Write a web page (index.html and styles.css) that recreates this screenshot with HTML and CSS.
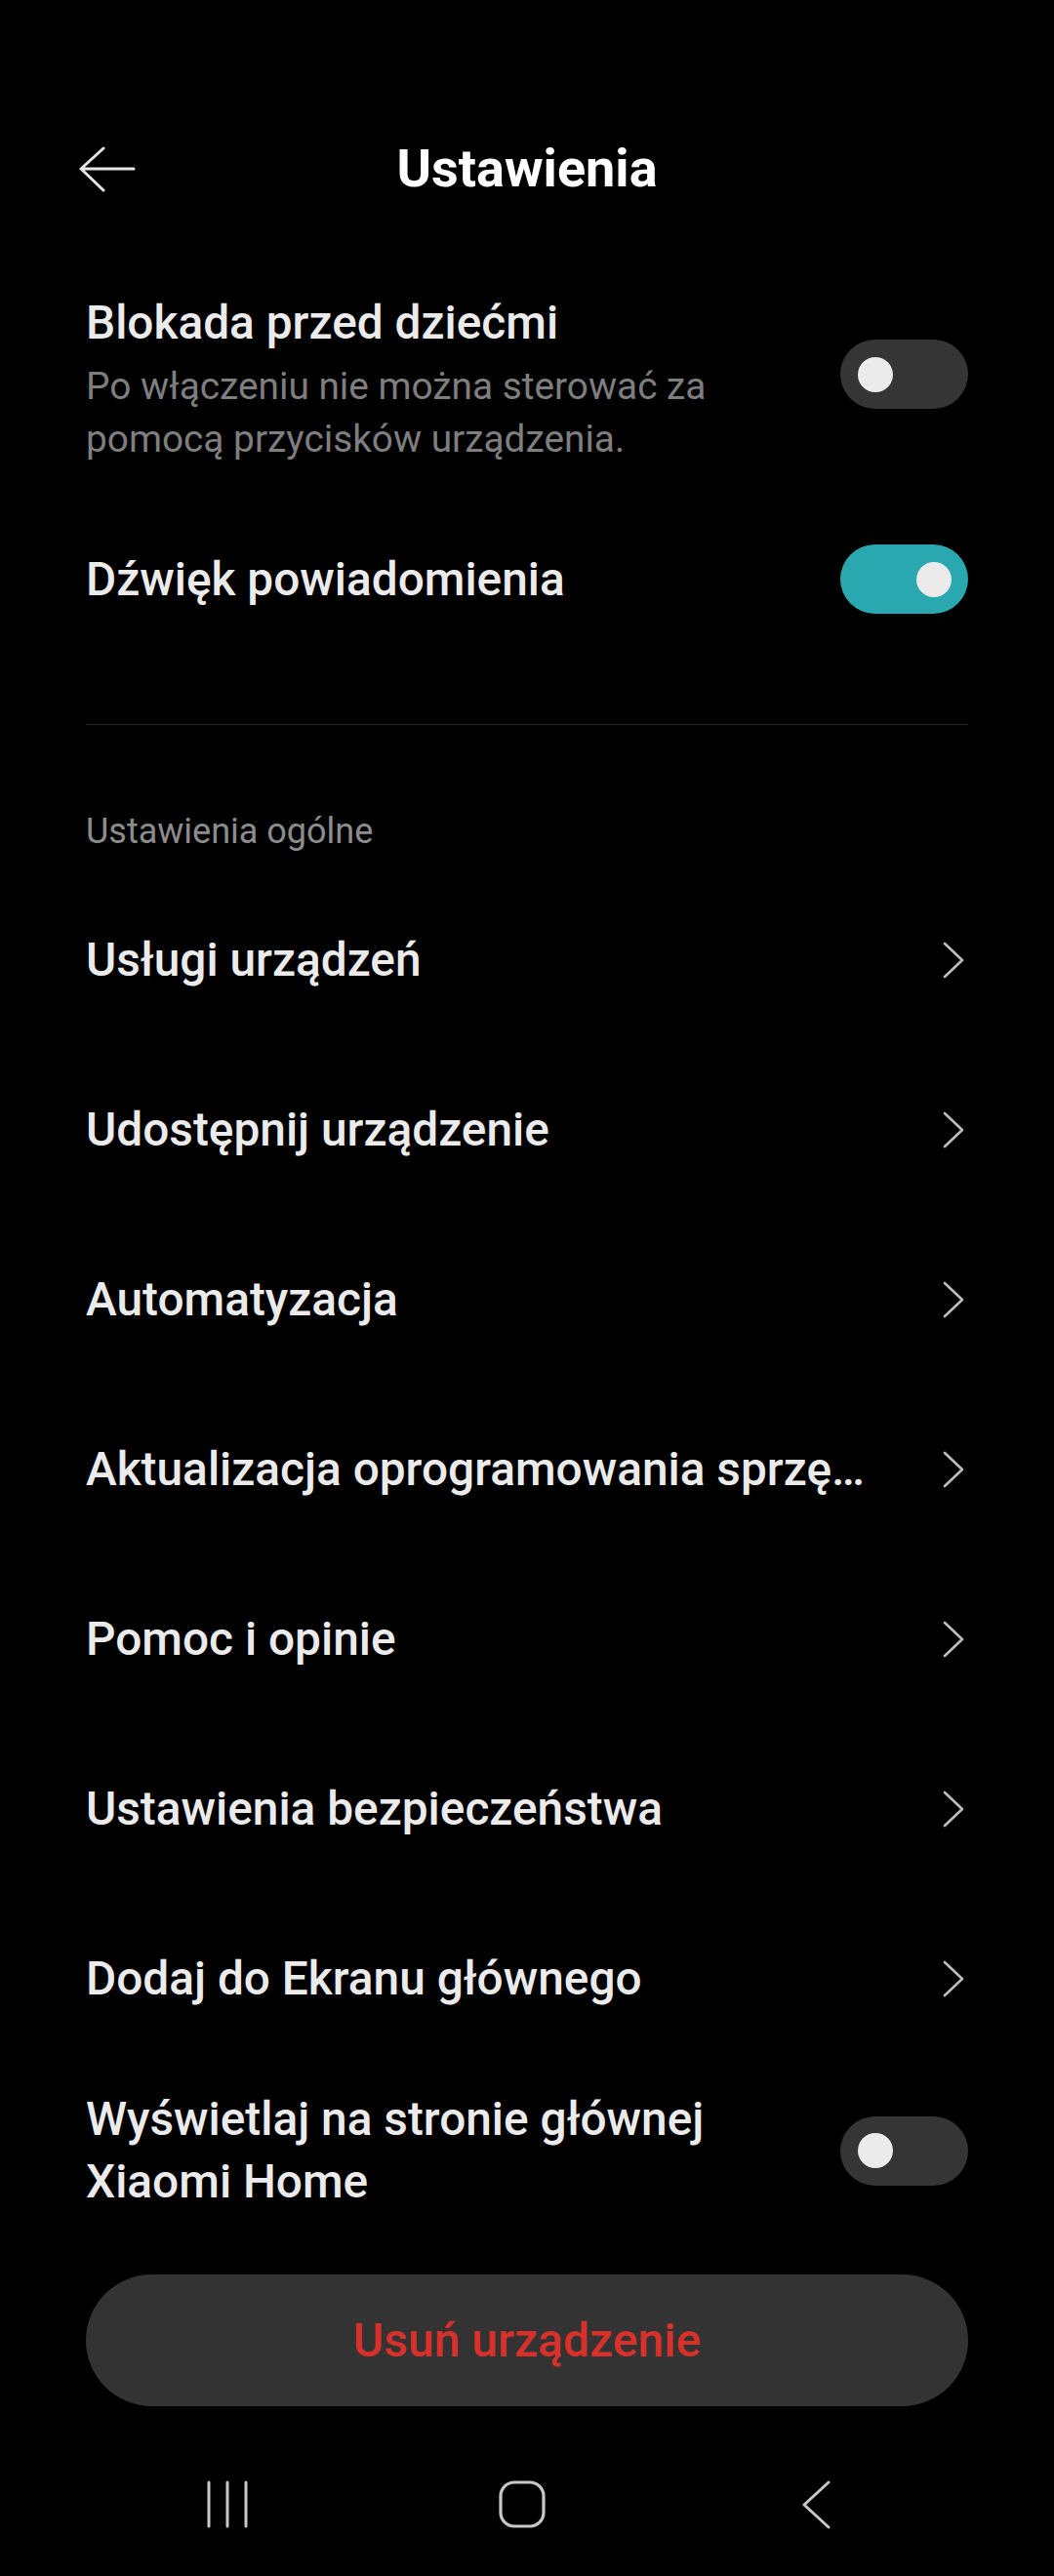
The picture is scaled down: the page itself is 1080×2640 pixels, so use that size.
FILE: index.html
```html
<!DOCTYPE html>
<html lang="pl">
<head>
<meta charset="utf-8">
<title>Ustawienia</title>
<link rel="stylesheet" href="styles.css">
</head>
<body>
<div class="screen">
  <header class="topbar">
    <svg class="back" width="60" height="50" viewBox="0 0 60 50">
      <path d="M57 23 H3 M26 2 L3 23 L26 45" fill="none" stroke="#e6e6e6" stroke-width="3" stroke-linecap="round" stroke-linejoin="round"/>
    </svg>
    <h1 class="title">Ustawienia</h1>
  </header>

  <div class="row row-lock">
    <div class="texts">
      <div class="label">Blokada przed dziećmi</div>
      <div class="sub">Po włączeniu nie można sterować za pomocą przycisków urządzenia.</div>
    </div>
    <div class="toggle"><span class="knob"></span></div>
  </div>

  <div class="row row-sound">
    <div class="texts"><div class="label">Dźwięk powiadomienia</div></div>
    <div class="toggle on"><span class="knob"></span></div>
  </div>

  <div class="divider"></div>

  <div class="section">Ustawienia ogólne</div>

  <ul class="menu">
    <li class="item"><span class="label ell">Usługi urządzeń</span><svg class="chev" width="30" height="40" viewBox="0 0 30 40"><path d="M6 3 L24 20 L6 37" fill="none" stroke="#bdbdbd" stroke-width="2.6" stroke-linecap="round" stroke-linejoin="round"/></svg></li>
    <li class="item"><span class="label ell">Udostępnij urządzenie</span><svg class="chev" width="30" height="40" viewBox="0 0 30 40"><path d="M6 3 L24 20 L6 37" fill="none" stroke="#bdbdbd" stroke-width="2.6" stroke-linecap="round" stroke-linejoin="round"/></svg></li>
    <li class="item"><span class="label ell">Automatyzacja</span><svg class="chev" width="30" height="40" viewBox="0 0 30 40"><path d="M6 3 L24 20 L6 37" fill="none" stroke="#bdbdbd" stroke-width="2.6" stroke-linecap="round" stroke-linejoin="round"/></svg></li>
    <li class="item"><span class="label ell">Aktualizacja oprogramowania sprzętowego</span><svg class="chev" width="30" height="40" viewBox="0 0 30 40"><path d="M6 3 L24 20 L6 37" fill="none" stroke="#bdbdbd" stroke-width="2.6" stroke-linecap="round" stroke-linejoin="round"/></svg></li>
    <li class="item"><span class="label ell">Pomoc i opinie</span><svg class="chev" width="30" height="40" viewBox="0 0 30 40"><path d="M6 3 L24 20 L6 37" fill="none" stroke="#bdbdbd" stroke-width="2.6" stroke-linecap="round" stroke-linejoin="round"/></svg></li>
    <li class="item"><span class="label ell">Ustawienia bezpieczeństwa</span><svg class="chev" width="30" height="40" viewBox="0 0 30 40"><path d="M6 3 L24 20 L6 37" fill="none" stroke="#bdbdbd" stroke-width="2.6" stroke-linecap="round" stroke-linejoin="round"/></svg></li>
    <li class="item"><span class="label ell">Dodaj do Ekranu głównego</span><svg class="chev" width="30" height="40" viewBox="0 0 30 40"><path d="M6 3 L24 20 L6 37" fill="none" stroke="#bdbdbd" stroke-width="2.6" stroke-linecap="round" stroke-linejoin="round"/></svg></li>
  </ul>

  <div class="row row-home">
    <div class="texts"><div class="label">Wyświetlaj na stronie głównej Xiaomi Home</div></div>
    <div class="toggle"><span class="knob"></span></div>
  </div>

  <div class="btn-wrap">
    <button class="danger">Usuń urządzenie</button>
  </div>

  <nav class="navbar">
    <svg class="nav-ico" width="60" height="50" viewBox="0 0 60 50">
      <path d="M11 2 V47 M30 2 V47 M49 2 V47" stroke="#c8c8c8" stroke-width="3" stroke-linecap="round"/>
    </svg>
    <svg class="nav-ico" width="60" height="50" viewBox="0 0 60 50">
      <rect x="8" y="2" width="44" height="45" rx="14" ry="14" fill="none" stroke="#c8c8c8" stroke-width="3.2"/>
    </svg>
    <svg class="nav-ico" width="60" height="50" viewBox="0 0 60 50">
      <path d="M42 2 L17 25 L42 48" fill="none" stroke="#c8c8c8" stroke-width="3" stroke-linecap="round" stroke-linejoin="round"/>
    </svg>
  </nav>
</div>
</body>
</html>
```

FILE: styles.css
```css
* { box-sizing: border-box; }
html, body {
  margin: 0;
  padding: 0;
  background: #000;
}
body {
  font-family: Roboto, "Noto Sans", "Liberation Sans", sans-serif;
  color: #e9e9e9;
}
.screen {
  width: 1080px;
  height: 2640px;
  overflow: hidden;
  background: #000;
}
.topbar {
  position: relative;
  height: 146px;
  margin-top: 100px;
  display: flex;
  align-items: center;
  justify-content: center;
}
.back {
  position: absolute;
  left: 80px;
  top: 50px;
}
.title {
  margin: 0;
  font-size: 54px;
  font-weight: 700;
  color: #fff;
  line-height: 64px;
}
.row {
  display: flex;
  align-items: center;
  padding: 0 88px;
  gap: 40px;
}
.texts { flex: 1; min-width: 0; }
.label {
  font-size: 47.8px;
  font-weight: 500;
  line-height: 64px;
  color: #ebebeb;
}
.sub {
  margin-top: 6px;
  font-size: 38.8px;
  line-height: 54px;
  color: #7e7e7e;
  padding-right: 20px;
}
.row-lock { padding-top: 53px; }
.row-lock .toggle { margin-bottom: 9px; }
.row-sound { margin-top: 81px; }
.toggle {
  flex: none;
  width: 131px;
  height: 71px;
  border-radius: 36px;
  background: #353535;
  display: flex;
  align-items: center;
  padding: 0 18px;
}
.toggle.on {
  background: #29a9af;
  justify-content: flex-end;
  padding: 0 17px;
}
.knob {
  width: 36px;
  height: 36px;
  border-radius: 50%;
  background: #ebebeb;
}
.divider {
  margin: 113px 88px 0;
  height: 1px;
  background: #2a2a2a;
}
.section {
  margin-top: 85px;
  padding: 0 88px;
  font-size: 36px;
  line-height: 48px;
  color: #8c8c8c;
}
.menu {
  list-style: none;
  margin: 21px 0 0;
  padding: 0;
}
.item {
  height: 174px;
  display: flex;
  align-items: center;
  padding: 0 88px;
  gap: 69px;
}
.item .label { flex: 1; min-width: 0; }
.ell {
  white-space: nowrap;
  overflow: hidden;
  text-overflow: ellipsis;
}
.chev { flex: none; }
.row-home {
  padding-top: 25px;
  padding-bottom: 25px;
}
.row-home .label { padding-right: 10px; }
.btn-wrap {
  margin-top: 38px;
  padding: 0 88px;
}
.danger {
  width: 100%;
  height: 135px;
  border: 0;
  border-radius: 68px;
  background: #333;
  color: #d8302a;
  font-family: Roboto, "Noto Sans", sans-serif;
  font-size: 48px;
  font-weight: 500;
}
.navbar {
  margin-top: 76px;
  display: flex;
  align-items: center;
  padding-left: 203px;
  gap: 242px;
}
.nav-ico { flex: none; }
```
